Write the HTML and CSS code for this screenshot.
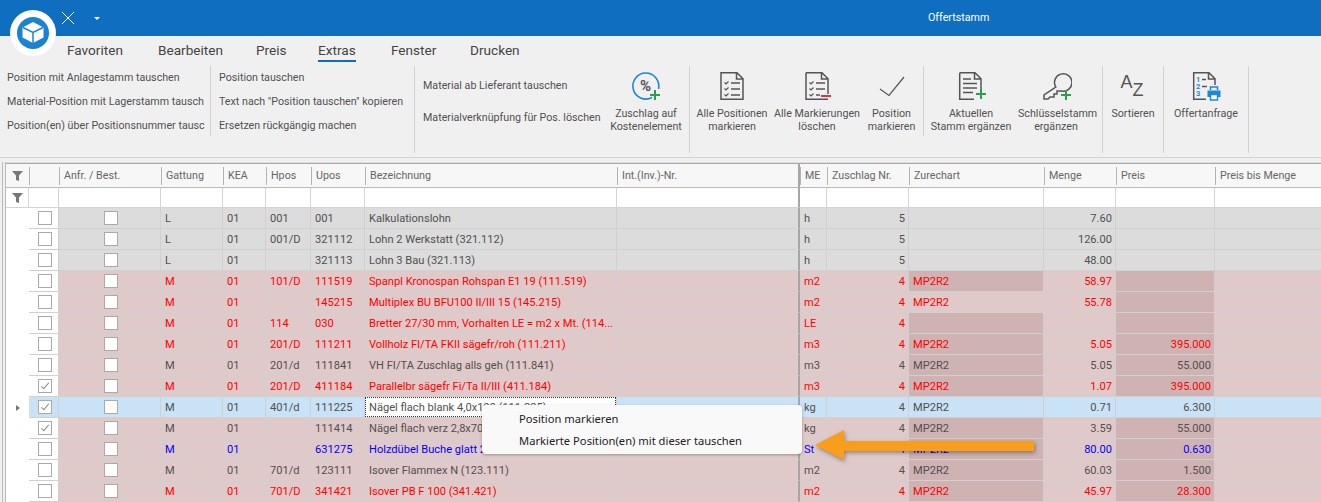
FILE: index.html
```html
<!DOCTYPE html>
<html lang="de">
<head>
    <meta charset="UTF-8">
    <title>Offertstamm</title>
    <link rel="stylesheet" href="styles.css">
</head>
<body>

<div class="titlebar">
    <svg class="qa-x" width="14" height="14" viewBox="0 0 14 14"><path d="M1 1L13 13M13 1L1 13" stroke="#fff" stroke-width="1" fill="none"/></svg>
    <span class="qa-arrow"></span>
    <span class="title">Offertstamm</span>
</div>

<svg class="logo" width="48" height="48" viewBox="0 0 48 48">
    <circle cx="24" cy="24" r="23" fill="#fff"/>
    <circle cx="24" cy="24" r="16" fill="#1a82d2"/>
    <path d="M24 13L34.500 18.500V28.500L24 34L13.500 28.500V18.500Z" fill="#fff"/>
    <path d="M14 18.500L24 23.500L34 18.500M24 23.500V34" stroke="#1a82d2" stroke-width="1.500" fill="none"/>
</svg>

<ul class="tabs">
    <li>Favoriten</li>
    <li>Bearbeiten</li>
    <li>Preis</li>
    <li class="active">Extras</li>
    <li>Fenster</li>
    <li>Drucken</li>
</ul>

<div class="ribbon">
    <div class="group g1">
        <div class="link">Position mit Anlagestamm tauschen</div>
        <div class="link">Material-Position mit Lagerstamm tausch</div>
        <div class="link">Position(en) über Positionsnummer tausc</div>
    </div>
    <div class="sep"></div>
    <div class="group g2">
        <div class="link">Position tauschen</div>
        <div class="link">Text nach "Position tauschen" kopieren</div>
        <div class="link">Ersetzen rückgängig machen</div>
    </div>
    <div class="sep tall"></div>
    <div class="group g3">
        <div class="links-wide">
            <div>Material ab Lieferant tauschen</div>
            <div>Materialverknüpfung für Pos. löschen</div>
        </div>
        <div class="btn w74">
            <svg width="32" height="32" viewBox="0 0 32 32">
                <path d="M22 27.500A13 13 0 1 1 28.500 19" stroke="#1c87d6" stroke-width="1.600" fill="none"/>
                <text x="15.500" y="20.500" class="pct">%</text>
                <path d="M25 20V30M20 25H30" stroke="#2c9f4c" stroke-width="2" fill="none"/>
            </svg>
            <span>Zuschlag auf<br>Kostenelement</span>
        </div>
    </div>
    <div class="sep tall"></div>
    <div class="group g4">
        <div class="btn w84">
            <svg width="32" height="32" viewBox="0 0 32 32">
                <path d="M5 2.700H21L27 8.700V29.300H5Z M20.500 3V9H27" stroke="#555" stroke-width="1.500" fill="none"/>
                <path d="M8.500 12.500L10 14L12.500 11.500M8.500 18.500L10 20L12.500 17.500M8.500 24.500L10 26L12.500 23.500" stroke="#555" stroke-width="1.200" fill="none"/>
                <path d="M15 13H24M15 19H24M15 25H24" stroke="#555" stroke-width="1.500" fill="none"/>
            </svg>
            <span>Alle Positionen<br>markieren</span>
        </div>
        <div class="btn w86">
            <svg width="32" height="32" viewBox="0 0 32 32">
                <path d="M5 2.700H21L27 8.700V24M27 29.300H5V2.700 M20.500 3V9H27" stroke="#555" stroke-width="1.500" fill="none"/>
                <path d="M8.500 12.500L10 14L12.500 11.500M8.500 18.500L10 20L12.500 17.500M8.500 24.500L10 26L12.500 23.500" stroke="#555" stroke-width="1.200" fill="none"/>
                <path d="M15 13H24M15 19H24M15 25H19" stroke="#555" stroke-width="1.500" fill="none"/>
                <path d="M20 26H30" stroke="#e0333c" stroke-width="2" fill="none"/>
            </svg>
            <span>Alle Markierungen<br>löschen</span>
        </div>
        <div class="btn w63">
            <svg width="32" height="32" viewBox="0 0 32 32">
                <path d="M4 19L13 25.500L28 7" stroke="#555" stroke-width="1.200" fill="none"/>
            </svg>
            <span>Position<br>markieren</span>
        </div>
    </div>
    <div class="sep"></div>
    <div class="group g5">
        <div class="btn w94">
            <svg width="32" height="32" viewBox="0 0 32 32">
                <path d="M4.700 2.700H20L26 8.700V19M19 29.300H4.700V2.700 M19.500 3V9H26" stroke="#555" stroke-width="1.500" fill="none"/>
                <path d="M8 9H16M8 13.500H22M8 18H22M8 22.500H18" stroke="#555" stroke-width="1.500" fill="none"/>
                <path d="M26 19V29M21 24H31" stroke="#2c9f4c" stroke-width="2" fill="none"/>
            </svg>
            <span>Aktuellen<br>Stamm ergänzen</span>
        </div>
        <div class="btn w76">
            <svg width="32" height="32" viewBox="0 0 32 32">
                <path d="M15.800 17A8.700 8.700 0 1 1 21.500 21L17 21V24H14V27H10L8 29H4V25Z" stroke="#555" stroke-width="1.500" fill="none"/>
                <path d="M26 20V30M21 25H31" stroke="#2c9f4c" stroke-width="2" fill="none"/>
            </svg>
            <span>Schlüsselstamm<br>ergänzen</span>
        </div>
    </div>
    <div class="sep tall"></div>
    <div class="group g6">
        <div class="btn w60">
            <svg width="32" height="32" viewBox="0 0 32 32">
                <text x="3.500" y="18" class="az">A</text>
                <text x="15.500" y="26" class="az">Z</text>
            </svg>
            <span>Sortieren</span>
        </div>
    </div>
    <div class="sep tall"></div>
    <div class="group g7">
        <div class="btn w84">
            <svg width="32" height="32" viewBox="0 0 32 32">
                <path d="M16 29.300H3.700V2.700H19L25 8.700V15 M18.500 3V9H25" stroke="#555" stroke-width="1.500" fill="none"/>
                <text x="6" y="12" class="num">1</text>
                <text x="6" y="19" class="num">2</text>
                <text x="6" y="26" class="num">3</text>
                <path d="M12 9.500H16M12 16.500H17" stroke="#555" stroke-width="1.300" fill="none"/>
                <path d="M20.500 20V17H27.500V20" stroke="#1c87d6" stroke-width="1.600" fill="none"/>
                <path d="M17.500 20.500H30.500V27H17.500Z" fill="#1c87d6"/>
                <path d="M20.500 24.500H27.500V30H20.500Z" fill="#fff" stroke="#1c87d6" stroke-width="1.400"/>
            </svg>
            <span>Offertanfrage</span>
        </div>
    </div>
    <div class="sep tall"></div>
</div>

<div class="grid">
    <div class="grid-inner">
    <table>
        <colgroup>
            <col class="c-ind"><col class="c-chk"><col class="c-anf"><col class="c-gat"><col class="c-kea"><col class="c-hpo"><col class="c-upo"><col class="c-bez"><col class="c-int"><col class="c-me"><col class="c-zus"><col class="c-zur"><col class="c-men"><col class="c-pre"><col class="c-pbm">
        </colgroup>
        <thead>
            <tr class="head">
                <th><svg class="funnel" width="11" height="10" viewBox="0 0 11 10"><path d="M0 0H11L7 4.500V10L4 9V4.500Z" fill="#777"/></svg></th>
                <th><span></span></th>
                <th><span>Anfr. / Best.</span></th>
                <th><span>Gattung</span></th>
                <th><span>KEA</span></th>
                <th><span>Hpos</span></th>
                <th><span>Upos</span></th>
                <th><span>Bezeichnung</span></th>
                <th class="fix"><span>Int.(Inv.)-Nr.</span></th>
                <th><span>ME</span></th>
                <th><span>Zuschlag Nr.</span></th>
                <th><span>Zurechart</span></th>
                <th><span>Menge</span></th>
                <th><span>Preis</span></th>
                <th><span>Preis bis Menge</span></th>
            </tr>
            <tr class="filter">
                <td><svg class="funnel" width="11" height="10" viewBox="0 0 11 10"><path d="M0 0H11L7 4.500V10L4 9V4.500Z" fill="#777"/></svg></td>
                <td></td><td></td><td></td><td></td><td></td><td></td><td></td><td class="fix"></td><td></td><td></td><td></td><td></td><td></td><td></td>
            </tr>
        </thead>
        <tbody>
            <tr class="grey"><td class="ind"></td><td class="chk"><i class="cb"></i></td><td class="box"><i class="cb"></i></td><td>L</td><td>01</td><td>001</td><td>001</td><td>Kalkulationslohn</td><td class="fix"></td><td>h</td><td class="n">5</td><td></td><td class="n">7.60</td><td></td><td></td></tr>
            <tr class="grey"><td class="ind"></td><td class="chk"><i class="cb"></i></td><td class="box"><i class="cb"></i></td><td>L</td><td>01</td><td>001/D</td><td>321112</td><td>Lohn 2 Werkstatt (321.112)</td><td class="fix"></td><td>h</td><td class="n">5</td><td></td><td class="n">126.00</td><td></td><td></td></tr>
            <tr class="grey"><td class="ind"></td><td class="chk"><i class="cb"></i></td><td class="box"><i class="cb"></i></td><td>L</td><td>01</td><td></td><td>321113</td><td>Lohn 3 Bau (321.113)</td><td class="fix"></td><td>h</td><td class="n">5</td><td></td><td class="n">48.00</td><td></td><td></td></tr>
            <tr class="rose red"><td class="ind"></td><td class="chk"><i class="cb"></i></td><td class="box"><i class="cb"></i></td><td>M</td><td>01</td><td>101/D</td><td>111519</td><td>Spanpl Kronospan Rohspan E1 19 (111.519)</td><td class="fix"></td><td>m2</td><td class="n">4</td><td class="dark">MP2R2</td><td class="n">58.97</td><td class="n dark"></td><td></td></tr>
            <tr class="rose red"><td class="ind"></td><td class="chk"><i class="cb"></i></td><td class="box"><i class="cb"></i></td><td>M</td><td>01</td><td></td><td>145215</td><td>Multiplex BU BFU100 II/III 15 (145.215)</td><td class="fix"></td><td>m2</td><td class="n">4</td><td>MP2R2</td><td class="n">55.78</td><td class="n dark"></td><td></td></tr>
            <tr class="rose red"><td class="ind"></td><td class="chk"><i class="cb"></i></td><td class="box"><i class="cb"></i></td><td>M</td><td>01</td><td>114</td><td>030</td><td>Bretter 27/30 mm, Vorhalten LE = m2 x Mt. (114...</td><td class="fix"></td><td>LE</td><td class="n">4</td><td class="dark"></td><td class="n"></td><td class="n dark"></td><td></td></tr>
            <tr class="rose red"><td class="ind"></td><td class="chk"><i class="cb"></i></td><td class="box"><i class="cb"></i></td><td>M</td><td>01</td><td>201/D</td><td>111211</td><td>Vollholz FI/TA FKII sägefr/roh (111.211)</td><td class="fix"></td><td>m3</td><td class="n">4</td><td class="dark">MP2R2</td><td class="n">5.05</td><td class="n dark">395.000</td><td></td></tr>
            <tr class="rose"><td class="ind"></td><td class="chk"><i class="cb"></i></td><td class="box"><i class="cb"></i></td><td>M</td><td>01</td><td>201/d</td><td>111841</td><td>VH FI/TA Zuschlag alls geh (111.841)</td><td class="fix"></td><td>m3</td><td class="n">4</td><td class="dark">MP2R2</td><td class="n">5.05</td><td class="n dark">55.000</td><td></td></tr>
            <tr class="rose red"><td class="ind"></td><td class="chk"><i class="cb on"></i></td><td class="box"><i class="cb"></i></td><td>M</td><td>01</td><td>201/D</td><td>411184</td><td>Parallelbr sägefr Fi/Ta II/III (411.184)</td><td class="fix"></td><td>m3</td><td class="n">4</td><td class="dark">MP2R2</td><td class="n">1.07</td><td class="n dark">395.000</td><td></td></tr>
            <tr class="sel"><td class="ind"><b class="cur"></b></td><td class="chk"><i class="cb on"></i></td><td class="box"><i class="cb"></i></td><td>M</td><td>01</td><td>401/d</td><td>111225</td><td><div class="focus">Nägel flach blank 4,0x100 (111.225)</div></td><td class="fix"></td><td>kg</td><td class="n">4</td><td>MP2R2</td><td class="n">0.71</td><td class="n">6.300</td><td></td></tr>
            <tr class="rose"><td class="ind"></td><td class="chk"><i class="cb on"></i></td><td class="box"><i class="cb"></i></td><td>M</td><td>01</td><td></td><td>111414</td><td>Nägel flach verz 2,8x70 (111.414)</td><td class="fix"></td><td>kg</td><td class="n">4</td><td class="dark">MP2R2</td><td class="n">3.59</td><td class="n dark">55.000</td><td></td></tr>
            <tr class="rose blue"><td class="ind"></td><td class="chk"><i class="cb"></i></td><td class="box"><i class="cb"></i></td><td>M</td><td>01</td><td></td><td>631275</td><td>Holzdübel Buche glatt 2...</td><td class="fix"></td><td>St</td><td class="n">4</td><td class="dark">MP2R2</td><td class="n">80.00</td><td class="n dark">0.630</td><td></td></tr>
            <tr class="rose"><td class="ind"></td><td class="chk"><i class="cb"></i></td><td class="box"><i class="cb"></i></td><td>M</td><td>01</td><td>701/d</td><td>123111</td><td>Isover Flammex N (123.111)</td><td class="fix"></td><td>m2</td><td class="n">4</td><td class="dark">MP2R2</td><td class="n">60.03</td><td class="n dark">1.500</td><td></td></tr>
            <tr class="rose red"><td class="ind"></td><td class="chk"><i class="cb"></i></td><td class="box"><i class="cb"></i></td><td>M</td><td>01</td><td>701/D</td><td>341421</td><td>Isover PB F 100 (341.421)</td><td class="fix"></td><td>m2</td><td class="n">4</td><td class="dark">MP2R2</td><td class="n">45.97</td><td class="n dark">28.300</td><td></td></tr>
        </tbody>
    </table>
    </div>
</div>

<div class="menu">
    <div>Position markieren</div>
    <div>Markierte Position(en) mit dieser tauschen</div>
</div>

<svg class="arrow" width="230" height="40" viewBox="0 0 230 40">
    <path d="M5 15L34 0V11H224V21H34V30Z" fill="#f99d1c"/>
</svg>

</body>
</html>
```

FILE: styles.css
```css
body{
    margin: 0;
    width: 1321px;
    height: 502px;
    overflow: hidden;
    background: #f0f0f0;
    font-family: Roboto, "Noto Sans", sans-serif;
    font-size: 10.7px;
    color: #505050;
}
ul{
    margin: 0;
    padding: 0;
    list-style: none;
}

/* title bar */
.titlebar{
    height: 36px;
    background: #0f6ebf;
    position: relative;
    display: flex;
    align-items: center;
    padding-left: 61px;
}
.qa-x{
    margin-right: 19px;
}
.qa-arrow{
    width: 0;
    height: 0;
    border: 3px solid transparent;
    border-top: 3px solid #fff;
    border-bottom: 0;
}
.title{
    position: absolute;
    left: 928px;
    top: 11px;
    color: #fff;
    line-height: 14px;
}
.logo{
    position: absolute;
    left: 9px;
    top: 9px;
}

/* tabs */
.tabs{
    height: 28px;
    display: grid;
    grid-template-columns: 91px 98px 62px 73px 79px auto;
    justify-items: start;
    padding-left: 67px;
    font-size: 13.6px;
    color: #444;
}
.tabs li{
    height: 24px;
    line-height: 29px;
}
.tabs li.active{
    border-bottom: 2px solid #0f6ebf;
}

/* ribbon */
.ribbon{
    height: 93px;
    display: flex;
    align-items: flex-start;
    border-bottom: 1px solid #d2d2d2;
}
.sep{
    width: 1px;
    height: 70px;
    margin-top: 2px;
    background: #d2d2d2;
    flex: none;
}
.sep.tall{
    height: 87px;
}
.group{
    flex: none;
    display: flex;
    white-space: nowrap;
}
.g1,.g2{
    display: block;
    padding-top: 2px;
    overflow: hidden;
}
.g1{
    width: 202px;
    padding-left: 7px;
    margin-right: 1px;
}
.g2{
    width: 195px;
    padding-left: 8px;
}
.link{
    height: 24px;
    line-height: 24px;
    overflow: hidden;
}
.g3{
    width: 274px;
}
.links-wide{
    width: 186px;
    padding-left: 8px;
    padding-top: 6px;
}
.links-wide div{
    height: 32px;
    line-height: 32px;
}
.g4{
    width: 233px;
}
.g5{
    width: 178px;
}
.g6{
    width: 60px;
}
.g7{
    width: 84px;
}
.btn{
    text-align: center;
    padding-top: 6px;
    line-height: 13px;
    flex: none;
}
.btn svg{
    display: block;
    margin: 0 auto 5px;
}
.w60{ width: 60px; }
.w63{ width: 63px; }
.w74{ width: 74px; }
.w76{ width: 76px; }
.w84{ width: 84px; }
.w86{ width: 86px; }
.w94{ width: 94px; }
.pct{
    font-size: 15px;
    font-weight: bold;
    fill: #555;
    text-anchor: middle;
}
.az{
    font-size: 18px;
    fill: #555;
    font-family: "Liberation Sans", sans-serif;
}
.num{
    font-size: 7.500px;
    font-weight: bold;
    fill: #1c87d6;
}

/* grid */
.grid{
    margin: 4px 0 0 2px;
    padding-left: 2px;
    border-left: 1px solid #bbb;
    border-top: 1px solid #ddd;
}
.grid-inner{
    border-left: 1px solid #bbb;
    border-top: 1px solid #aaa;
}
table{
    width: 1317px;
    table-layout: fixed;
    border-collapse: separate;
    border-spacing: 0;
    font-size: 11.1px;
}
.c-ind{ width: 23px; }
.c-chk{ width: 30px; }
.c-anf{ width: 102px; }
.c-gat{ width: 62px; }
.c-kea{ width: 43px; }
.c-hpo{ width: 45px; }
.c-upo{ width: 54px; }
.c-bez{ width: 252px; }
.c-int{ width: 183px; }
.c-me{ width: 27px; }
.c-zus{ width: 82px; }
.c-zur{ width: 135px; }
.c-men{ width: 72px; }
.c-pre{ width: 99px; }
.c-pbm{ width: 108px; }

th{
    height: 23px;
    padding: 0;
    font-weight: normal;
    font-size: 10.7px;
    text-align: left;
    color: #666;
    background: #f7f7f7;
    border-bottom: 1px solid #bbb;
}
th span{
    display: block;
    height: 18px;
    line-height: 18px;
    padding-left: 4px;
    border-left: 1px solid #b4b4b4;
    white-space: nowrap;
    overflow: hidden;
}
.filter td{
    height: 19px;
    padding: 0;
    background: #fff;
    border-right: 1px solid #d4d4d4;
    border-bottom: 1px solid #d4d4d4;
    text-align: center;
}
.funnel{
    display: block;
    margin: 1px auto 0;
}
tbody td{
    height: 18px;
    padding: 2px 4px 0;
    border-right: 1px solid #d0d0d0;
    border-bottom: 1px solid #d0d0d0;
    white-space: nowrap;
    overflow: hidden;
    line-height: 18px;
}
td.fix{
    border-right: 2px solid #a6a6a6 !important;
}
th.fix{
    border-right: 2px solid #a6a6a6;
}
tbody td.n{
    text-align: right;
    padding-right: 3px;
}
tbody td.ind{
    background: #fff;
    padding: 0;
    border-right: 0;
    border-bottom: 0;
}
tbody td.chk{
    background: #fff;
    padding: 2px 0 0 2px;
    text-align: center;
}
tbody td.box{
    padding: 2px 0 0 2px;
    text-align: center;
}
.cb{
    display: inline-block;
    box-sizing: border-box;
    width: 14px;
    height: 14px;
    background: #fff;
    border: 1px solid #aaa;
    vertical-align: middle;
    position: relative;
    top: -1px;
}
.cb.on::after{
    content: "";
    display: block;
    width: 3px;
    height: 7px;
    margin: 1px 0 0 4px;
    border-right: 1px solid #888;
    border-bottom: 1px solid #888;
    transform: rotate(40deg);
}
.grey td:not(.ind):not(.chk){
    background: #dcdcdc;
}
.rose td:not(.ind):not(.chk){
    background: #e0c9c9;
}
.rose td.dark:not(.ind){
    background: #cfb2b2;
}
.sel td:not(.ind){
    background: #c9e2f6;
}
.red td{
    color: #f00;
}
.blue td{
    color: #00f;
}
.focus{
    box-sizing: border-box;
    margin: -2px -4px 0;
    padding: 1px 3px 0;
    height: 20px;
    line-height: 17px;
    background: #fff;
    border: 1px dotted #333;
}
.cur{
    display: block;
    width: 0;
    height: 0;
    margin-left: 10px;
    border: 3.500px solid transparent;
    border-left: 4px solid #777;
    border-right: 0;
}

/* context menu */
.menu{
    position: absolute;
    left: 482px;
    top: 405px;
    width: 320px;
    height: 49px;
    box-sizing: border-box;
    padding-top: 3px;
    padding-left: 37px;
    background: #f9f9f9;
    border-radius: 4px;
    box-shadow: 0 1px 3px rgba(0,0,0,0.3);
    color: #222;
    font-family: "Noto Sans", sans-serif;
    font-size: 11.2px;
}
.menu div{
    height: 22px;
    line-height: 22px;
}

.arrow{
    position: absolute;
    left: 810px;
    top: 430px;
    filter: drop-shadow(1px 2px 2px rgba(0,0,0,0.35));
}
```
